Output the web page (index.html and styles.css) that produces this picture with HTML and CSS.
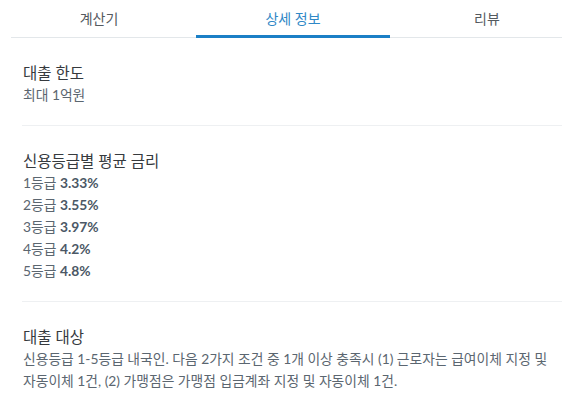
FILE: index.html
```html
<!DOCTYPE html>
<html lang="ko">
<head>
<meta charset="utf-8">
<title>상세 정보</title>
<link rel="stylesheet" href="styles.css">
</head>
<body>
<div class="page">
  <nav class="tabbar">
    <div class="tabs">
      <div class="tab">계산기</div>
      <div class="tab active">상세 정보</div>
      <div class="tab">리뷰</div>
    </div>
  </nav>
  <section class="section">
    <h2 class="title">대출 한도</h2>
    <p class="text">최대 1억원</p>
  </section>
  <section class="section">
    <h2 class="title">신용등급별 평균 금리</h2>
    <ul class="rates">
      <li class="text">1등급 <b>3.33%</b></li>
      <li class="text">2등급 <b>3.55%</b></li>
      <li class="text">3등급 <b>3.97%</b></li>
      <li class="text">4등급 <b>4.2%</b></li>
      <li class="text">5등급 <b>4.8%</b></li>
    </ul>
  </section>
  <section class="section">
    <h2 class="title">대출 대상</h2>
    <p class="text">신용등급 1-5등급 내국인. 다음 2가지 조건 중 1개 이상 충족시 (1) 근로자는 급여이체 지정 및 자동이체 1건, (2) 가맹점은 가맹점 입금계좌 지정 및 자동이체 1건.</p>
  </section>
</div>
</body>
</html>
```

FILE: styles.css
```css
html, body {
  margin: 0;
  padding: 0;
  background: #ffffff;
  overflow: hidden;
}

body {
  font-family: Lato, "Noto Sans CJK KR", sans-serif;
  color: #333;
}

.page {
  width: 562px;
}

.tabbar {
  margin-left: 11px;
  height: 38px;
  box-shadow: inset 0 -1px 0 #e3e7ea;
}

.tabs {
  display: flex;
  margin-left: -9px;
  width: 582px;
}

.tab {
  flex: 1;
  box-sizing: border-box;
  height: 38px;
  padding-top: 10px;
  text-align: center;
  font-size: 14px;
  line-height: 18px;
  color: #555a5f;
}

.tab.active {
  color: #2f88c6;
  border-bottom: 3px solid #1b7fc6;
}

.section {
  margin-left: 22px;
  padding: 24px 0 19px 1px;
  border-bottom: 1px solid #eef0f2;
}

.section:last-child {
  border-bottom: none;
}

.title {
  margin: 0;
  font-size: 15.5px;
  font-weight: normal;
  line-height: 22px;
  color: #363a3e;
}

.text {
  margin: 0;
  font-size: 13.8px;
  line-height: 22px;
  color: #5b6670;
}

.rates {
  list-style: none;
  margin: 0;
  padding: 0;
}

.rates b {
  font-weight: bold;
  color: #4b5866;
}
```
